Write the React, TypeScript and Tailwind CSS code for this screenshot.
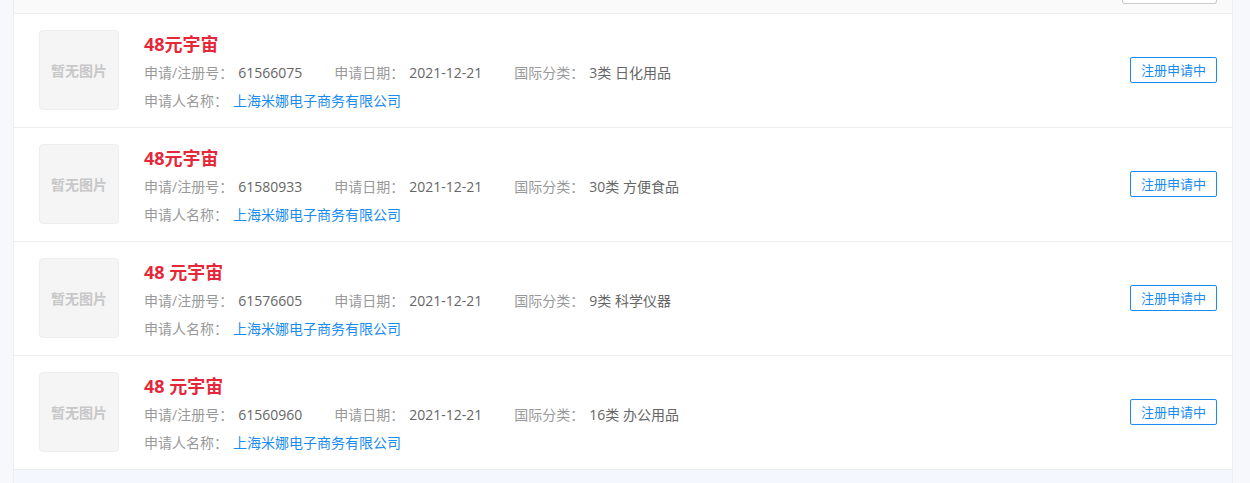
const rows = [
  { title: '48元宇宙', no: '61566075', date: '2021-12-21', cls: '3类 日化用品' },
  { title: '48元宇宙', no: '61580933', date: '2021-12-21', cls: '30类 方便食品' },
  { title: '48 元宇宙', no: '61576605', date: '2021-12-21', cls: '9类 科学仪器' },
  { title: '48 元宇宙', no: '61560960', date: '2021-12-21', cls: '16类 办公用品' },
]

const font = { fontFamily: '"Open Sans", "Noto Sans CJK SC", sans-serif' }

function Field({ label, value }: { label: string; value: string }) {
  return (
    <span className="mr-[32px] whitespace-nowrap">
      <span className="text-[#999]">{label}</span>
      <span className="ml-[5px] text-[#666]">{value}</span>
    </span>
  )
}

function TrademarkRow({ title, no, date, cls }: (typeof rows)[number]) {
  return (
    <div className="flex h-[114px] border-b border-[#eee] bg-white pl-[25px] pr-[15px] pt-[16px]">
      <div className="flex h-[80px] w-[80px] shrink-0 items-center justify-center rounded-[4px] border border-[#eee] bg-[#f5f5f5]">
        <span className="text-[14px] font-bold text-[#c8c8c8]">暂无图片</span>
      </div>
      <div className="ml-[25px] flex-1">
        <div className="text-[18px] font-bold leading-[29px] text-[#e4283a]">{title}</div>
        <div className="text-[14px] leading-[28px]">
          <Field label="申请/注册号：" value={no} />
          <Field label="申请日期：" value={date} />
          <Field label="国际分类：" value={cls} />
        </div>
        <div className="text-[14px] leading-[28px]">
          <span className="text-[#999]">申请人名称：</span>
          <span className="ml-[5px] text-[#1a8cf0]">上海米娜电子商务有限公司</span>
        </div>
      </div>
      <div className="mt-[27px] self-start">
        <span className="block rounded-[2px] border border-[#1a8cf0] px-[10px] text-[13px] leading-[24px] text-[#1a8cf0]">
          注册申请中
        </span>
      </div>
    </div>
  )
}

export default function App() {
  return (
    <div className="h-[483px] w-[1250px] overflow-hidden bg-[#f7f8fb] pl-[13px] pr-[17px]" style={font}>
      <div className="h-full border-x border-[#eee] bg-[#f4f7fd]">
        <div className="flex h-[14px] justify-end border-b border-[#eee] bg-[#fafafa] pr-[15px]">
          <div className="h-[4px] w-[95px] rounded-b-[3px] border-x border-b border-[#ccc] bg-white" />
        </div>
        {rows.map((r) => (
          <TrademarkRow key={r.no} {...r} />
        ))}
      </div>
    </div>
  )
}
